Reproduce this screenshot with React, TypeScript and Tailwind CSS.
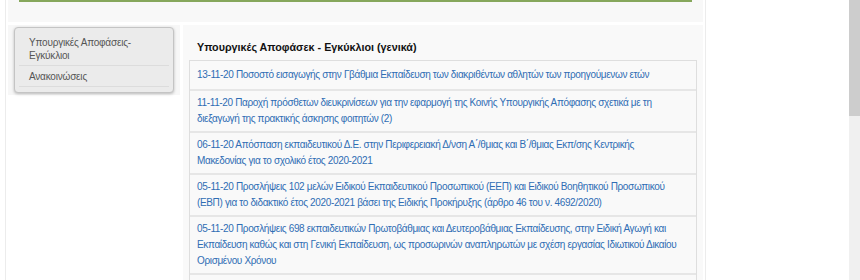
const sideItems = [
  'Υπουργικές Αποφάσεις-Εγκύκλιοι',
  'Ανακοινώσεις',
]

const news = [
  '13-11-20 Ποσοστό εισαγωγής στην Γβάθμια Εκπαίδευση των διακριθέντων αθλητών των προηγούμενων ετών',
  '11-11-20 Παροχή πρόσθετων διευκρινίσεων για την εφαρμογή της Κοινής Υπουργικής Απόφασης σχετικά με τη διεξαγωγή της πρακτικής άσκησης φοιτητών  (2)',
  '06-11-20 Απόσπαση εκπαιδευτικού Δ.Ε. στην Περιφερειακή Δ/νση Α΄/θμιας και Β΄/θμιας Εκπ/σης Κεντρικής\nΜακεδονίας για το σχολικό έτος 2020-2021',
  '05-11-20 Προσλήψεις 102 μελών Ειδικού Εκπαιδευτικού Προσωπικού (ΕΕΠ) και Ειδικού Βοηθητικού Προσωπικού (ΕΒΠ) για το διδακτικό έτος 2020-2021 βάσει της Ειδικής Προκήρυξης (άρθρο 46 του ν. 4692/2020)',
  '05-11-20 Προσλήψεις 698 εκπαιδευτικών Πρωτοβάθμιας και Δευτεροβάθμιας Εκπαίδευσης, στην Ειδική Αγωγή και Εκπαίδευση καθώς και στη Γενική Εκπαίδευση, ως προσωρινών αναπληρωτών με σχέση εργασίας Ιδιωτικού Δικαίου Ορισμένου Χρόνου',
]

export default function App() {
  return (
    <div className="flex h-[280px] overflow-hidden bg-white font-['Liberation_Sans',Arial,sans-serif]">
      <div className="flex-1 pl-[5px]">
        <div className="w-[701px] h-[280px] border-x border-[#ececec] px-[2px]">
          {/* top band */}
          <div className="h-[22px] bg-[#f8f8f8] px-[11px]">
            <div className="h-[2px] bg-[#86a75c]" />
          </div>
          <div className="flex gap-[3px] pt-[3px]">
            {/* sidebar */}
            <div className="w-[173px] self-start bg-[#f7f7f7] px-[6px] py-[2px]">
              <div className="rounded-[4px] border border-[#c4c4c4] bg-[#ebebeb] px-[4px] pt-[4px] pb-[5px] shadow-[0_1px_3px_rgba(0,0,0,0.25)]">
                {sideItems.map((s) => (
                  <div
                    key={s}
                    className="border-b border-[#dcdcdc] px-[10px] pt-[4px] pb-[3px] text-[10px] leading-[13px] tracking-[-0.2px] text-[#555]"
                  >
                    {s}
                  </div>
                ))}
              </div>
            </div>
            {/* main */}
            <div className="h-[255px] flex-1 bg-[#f9f9f9] px-[6px] pt-[14px]">
              <h2 className="px-[8px] pb-[5px] text-[10.75px] font-bold leading-[16px] text-[#111]">
                Υπουργικές Αποφάσεκ - Εγκύκλιοι (γενικά)
              </h2>
              <div className="w-[508px] h-[240px] border-x border-t border-[#dedede]">
                {news.map((n, i) => (
                  <div
                    key={i}
                    className={`whitespace-pre-line border-b-2 border-[#e6e6e6] px-[7px] text-[10px] leading-[16px] tracking-[-0.35px] text-[#2f6db4] ${i === 0 ? 'pt-[6px] pb-[6px]' : 'py-[4px]'}`}
                  >
                    {n}
                  </div>
                ))}
              </div>
            </div>
          </div>
        </div>
      </div>
      {/* scrollbar */}
      <div className="flex w-[11px] flex-col bg-[#f0f0f0]">
        <div className="h-[116px] bg-[#cdcdcd]" />
      </div>
    </div>
  )
}
